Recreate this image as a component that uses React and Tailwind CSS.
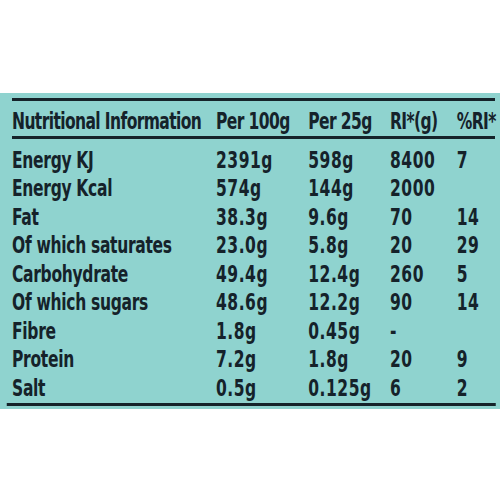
import React from "react";

const rows = [
  ["Energy KJ", "2391g", "598g", "8400", "7"],
  ["Energy Kcal", "574g", "144g", "2000", ""],
  ["Fat", "38.3g", "9.6g", "70", "14"],
  ["Of which saturates", "23.0g", "5.8g", "20", "29"],
  ["Carbohydrate", "49.4g", "12.4g", "260", "5"],
  ["Of which sugars", "48.6g", "12.2g", "90", "14"],
  ["Fibre", "1.8g", "0.45g", "-", ""],
  ["Protein", "7.2g", "1.8g", "20", "9"],
  ["Salt", "0.5g", "0.125g", "6", "2"],
];

const font = {
  fontFamily: '"DejaVu Sans Condensed", "Liberation Sans", sans-serif',
};

export default function App() {
  return (
    <div className="w-[500px] h-[500px] bg-white overflow-hidden">
      <div className="h-[93px]" />
      <div
        className="w-[500px] h-[316px] bg-[#8fd3cf] text-[#15222a] font-bold text-[23px] leading-none pt-[5px] overflow-hidden"
        style={font}
      >
        <div className="w-[667px] origin-left [transform:scaleX(0.75)]">
          <div className="ml-[16px] w-[644px] h-[3px] bg-[#15232a]" />
          <div className="ml-[16px] grid grid-cols-[272px_123px_109px_89px_51px] h-[35px] items-center pt-[6px] whitespace-nowrap tracking-[-0.8px]">
            <div>Nutritional Information</div>
            <div>Per 100g</div>
            <div>Per 25g</div>
            <div>RI*(g)</div>
            <div>%RI*</div>
          </div>
          <div className="ml-[16px] w-[644px] h-[3px] bg-[#15232a]" />
          <div className="ml-[16px] pt-[7px]">
            {rows.map((r, i) => (
              <div
                key={i}
                className="grid grid-cols-[272px_123px_109px_89px_51px] h-[28.5px] items-center whitespace-nowrap"
              >
                <div className="tracking-[-0.4px]">{r[0]}</div>
                <div className="tracking-[0.7px]">{r[1]}</div>
                <div className="tracking-[0.7px]">{r[2]}</div>
                <div className="tracking-[0.7px]">{r[3]}</div>
                <div className="tracking-[0.7px]">{r[4]}</div>
              </div>
            ))}
          </div>
          <div className="ml-[9px] w-[652px] h-[3px] bg-[#15232a]" />
        </div>
      </div>
    </div>
  );
}
